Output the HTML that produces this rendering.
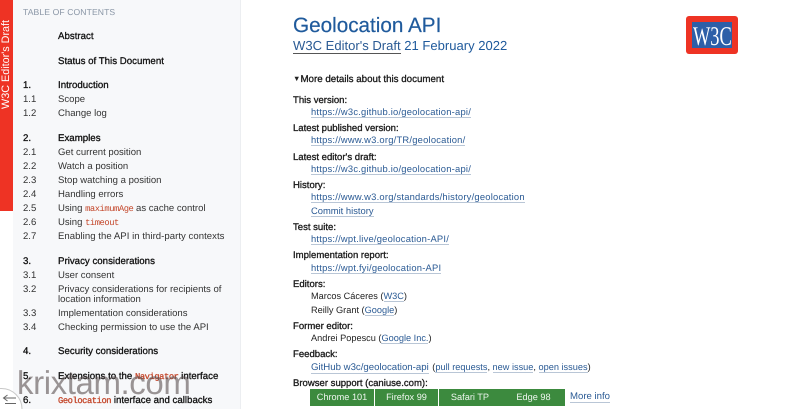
<!DOCTYPE html>
<html><head><meta charset="utf-8">
<style>
html,body{margin:0;padding:0;background:#fff;overflow:hidden}
body{position:relative;width:800px;height:409px;overflow:hidden;font-family:"Liberation Sans",sans-serif;font-size:9.5px;color:#222;text-rendering:geometricPrecision}
#w{position:absolute;left:0;top:0;width:800px;height:409px;overflow:hidden;filter:blur(.3px)}
#s{position:absolute;left:13px;top:0;width:227px;height:409px;background:#f7f8fa;border-right:1px solid #eceef1}
#r{position:absolute;left:0;top:0;width:13px;height:211px;background:#ee3324}
#r span{position:absolute;left:0;top:109px;height:13px;line-height:13px;color:#fff;font-size:10.8px;transform-origin:0 0;transform:rotate(-90deg);white-space:nowrap}
.t,.m{position:absolute;white-space:nowrap;line-height:14px;height:14px;margin-top:3px}
.t{font-size:9.55px;color:#333}
.t.b{font-size:9.7px}
.b{color:#111;-webkit-text-stroke:.3px #111}
.c{font-family:"Liberation Mono",monospace;color:#c4472b;font-size:8.8px;letter-spacing:-.45px;-webkit-text-stroke:0}
.bc{-webkit-text-stroke:.3px #c4472b}
.m{left:293px;font-size:9.2px;color:#222}
.m.b{font-size:9.55px}
a{color:#2a5a94;text-decoration:none;border-bottom:1px solid #b9c6d6}
.u{left:311px;margin-top:2px}
.l{font-size:9.4px;letter-spacing:.22px}
#bar div{position:absolute;top:389px;height:16.5px;line-height:17px;background:#3c8a3e;color:#eef6ee;text-align:center;font-size:9.2px}
</style></head><body>
<div id="w">
<div id="s"></div>
<div id="r"><span>W3C Editor's Draft</span></div>

<div class="t" style="left:23px;top:2px;color:#8a96a6;font-size:8.6px;letter-spacing:.1px">TABLE OF CONTENTS</div>
<div class="t b" style="left:58px;top:27px">Abstract</div>
<div class="t b" style="left:58px;top:52px">Status of This Document</div>
<div class="t b" style="left:23px;top:76px">1.</div><div class="t b" style="left:58px;top:76px">Introduction</div>
<div class="t" style="left:23px;top:90px">1.1</div><div class="t" style="left:58px;top:90px">Scope</div>
<div class="t" style="left:23px;top:104px">1.2</div><div class="t" style="left:58px;top:104px">Change log</div>
<div class="t b" style="left:23px;top:129px">2.</div><div class="t b" style="left:58px;top:129px">Examples</div>
<div class="t" style="left:23px;top:143px">2.1</div><div class="t" style="left:58px;top:143px">Get current position</div>
<div class="t" style="left:23px;top:157px">2.2</div><div class="t" style="left:58px;top:157px">Watch a position</div>
<div class="t" style="left:23px;top:171px">2.3</div><div class="t" style="left:58px;top:171px">Stop watching a position</div>
<div class="t" style="left:23px;top:185px">2.4</div><div class="t" style="left:58px;top:185px">Handling errors</div>
<div class="t" style="left:23px;top:199px">2.5</div><div class="t" style="left:58px;top:199px">Using <span class="c">maximumAge</span> as cache control</div>
<div class="t" style="left:23px;top:213px">2.6</div><div class="t" style="left:58px;top:213px">Using <span class="c">timeout</span></div>
<div class="t" style="left:23px;top:227px">2.7</div><div class="t" style="left:58px;top:227px;letter-spacing:.05px">Enabling the API in third-party contexts</div>
<div class="t b" style="left:23px;top:252px">3.</div><div class="t b" style="left:58px;top:252px">Privacy considerations</div>
<div class="t" style="left:23px;top:266px">3.1</div><div class="t" style="left:58px;top:266px">User consent</div>
<div class="t" style="left:23px;top:280px">3.2</div><div class="t" style="left:58px;top:280px">Privacy considerations for recipients of</div>
<div class="t" style="left:58px;top:290px">location information</div>
<div class="t" style="left:23px;top:304px">3.3</div><div class="t" style="left:58px;top:304px">Implementation considerations</div>
<div class="t" style="left:23px;top:318px">3.4</div><div class="t" style="left:58px;top:318px">Checking permission to use the API</div>
<div class="t b" style="left:23px;top:342px">4.</div><div class="t b" style="left:58px;top:342px">Security considerations</div>
<div class="t b" style="left:23px;top:367px">5.</div><div class="t b" style="left:58px;top:367px">Extensions to the <span class="c bc">Navigator</span> interface</div>
<div class="t b" style="left:23px;top:391px">6.</div><div class="t b" style="left:58px;top:391px"><span class="c bc">Geolocation</span> interface and callbacks</div>

<div class="m" style="top:13px;margin-top:0;height:26px;line-height:26px;font-size:20.7px;color:#1f5a9c;-webkit-text-stroke:.2px #1f5a9c">Geolocation API</div>
<div class="m" style="top:37px;margin-top:0;height:18px;line-height:18px;font-size:13.05px;color:#1f5a9c"><span style="border-bottom:1px solid #555;color:#2a5a94">W3C Editor's Draft</span> 21 February 2022</div>

<div class="m b" style="top:70px"><span style="font-size:7.5px;-webkit-text-stroke:0;position:relative;top:-1px">▼</span><span style="font-size:9.75px">More details about this document</span></div>
<div class="m b" style="top:91px">This version:</div>
<div class="m u l" style="top:103px"><a>https://w3c.github.io/geolocation-api/</a></div>
<div class="m b" style="top:119px">Latest published version:</div>
<div class="m u l" style="top:131px"><a>https://www.w3.org/TR/geolocation/</a></div>
<div class="m b" style="top:148px">Latest editor's draft:</div>
<div class="m u l" style="top:160px"><a>https://w3c.github.io/geolocation-api/</a></div>
<div class="m b" style="top:176px">History:</div>
<div class="m u l" style="top:188px"><a>https://www.w3.org/standards/history/geolocation</a></div>
<div class="m u" style="top:202px;font-size:9.4px"><a>Commit history</a></div>
<div class="m b" style="top:218px">Test suite:</div>
<div class="m u l" style="top:230px"><a>https://wpt.live/geolocation-API/</a></div>
<div class="m b" style="top:246px">Implementation report:</div>
<div class="m u l" style="top:259px"><a>https://wpt.fyi/geolocation-API</a></div>
<div class="m b" style="top:275px">Editors:</div>
<div class="m u" style="top:287px">Marcos Cáceres (<a>W3C</a>)</div>
<div class="m u" style="top:301px">Reilly Grant (<a>Google</a>)</div>
<div class="m b" style="top:317px">Former editor:</div>
<div class="m u" style="top:329px">Andrei Popescu (<a>Google Inc.</a>)</div>
<div class="m b" style="top:345px">Feedback:</div>
<div class="m u" style="top:358px"><a style="font-size:9.65px">GitHub w3c/geolocation-api</a> <span style="margin-left:1px">(</span><a>pull requests</a>, <a>new issue</a>, <a>open issues</a>)</div>
<div class="m b" style="top:374px">Browser support (caniuse.com):</div>
<div id="bar">
<div style="left:310px;width:64px">Chrome 101</div>
<div style="left:375px;width:63px">Firefox 99</div>
<div style="left:438.5px;width:63px">Safari TP</div>
<div style="left:502px;width:63px">Edge 98</div>
</div>
<div class="m" style="left:570px;top:388px;margin-top:2px;font-size:9.6px"><a>More info</a></div>

<div style="position:absolute;left:686px;top:16px;width:52px;height:38px;background:#ee3324;border-radius:3px"></div>
<div style="position:absolute;left:692px;top:22px;width:40px;height:26px;background:#2d5fa8;overflow:hidden">
<span style="position:absolute;left:0;top:1px;width:40px;height:25px;color:#fff;font-size:27px;line-height:27px;text-align:center;font-family:'Liberation Serif',serif;transform:scaleX(.68);transform-origin:50% 50%;display:block;white-space:nowrap;text-indent:-8px">W3C</span>
</div>

<svg style="position:absolute;left:0;top:385px;display:block" width="24" height="24" viewBox="0 385 24 24"><circle cx="1.5" cy="409" r="20.5" fill="#fff" stroke="#c8c8c8" stroke-width="1"/><path d="M16 398H3.5M7.5 395L3.5 398L7.5 401M5 403.5H16" fill="none" stroke="#666" stroke-width="1"/></svg>
<div style="position:absolute;left:17px;top:363px;font-size:33px;line-height:40px;letter-spacing:-.4px;color:rgba(90,80,80,.6);white-space:nowrap">krixtam.com</div>
</div>
</body></html>
